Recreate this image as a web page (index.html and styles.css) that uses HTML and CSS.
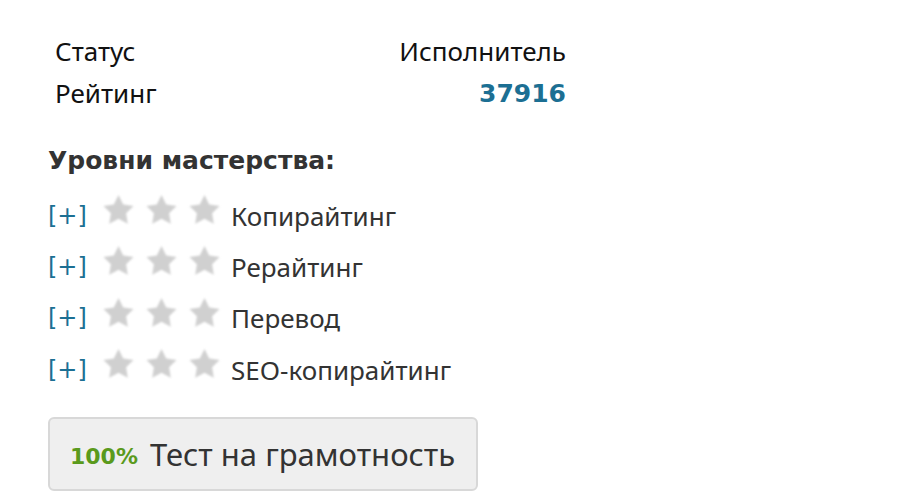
FILE: index.html
```html
<!DOCTYPE html>
<html lang="ru">
<head>
<meta charset="utf-8">
<link rel="stylesheet" href="styles.css">
</head>
<body>
<div class="page">
  <table class="info">
    <tr><td class="label">Статус</td><td class="value">Исполнитель</td></tr>
    <tr><td class="label">Рейтинг</td><td class="value rating">37916</td></tr>
  </table>
  <h3 class="heading">Уровни мастерства:</h3>
  <ul class="skills">
    <li class="skill"><a class="plus">[+]</a><span class="stars"><svg class="star" viewBox="0 0 24 24"><path d="M12 1.5L15.41 8.31 22.94 9.45 17.52 14.79 18.76 22.3 12 18.8 5.24 22.3 6.48 14.79 1.06 9.45 8.59 8.31z"/></svg><svg class="star" viewBox="0 0 24 24"><path d="M12 1.5L15.41 8.31 22.94 9.45 17.52 14.79 18.76 22.3 12 18.8 5.24 22.3 6.48 14.79 1.06 9.45 8.59 8.31z"/></svg><svg class="star" viewBox="0 0 24 24"><path d="M12 1.5L15.41 8.31 22.94 9.45 17.52 14.79 18.76 22.3 12 18.8 5.24 22.3 6.48 14.79 1.06 9.45 8.59 8.31z"/></svg></span><span class="name">Копирайтинг</span></li>
    <li class="skill"><a class="plus">[+]</a><span class="stars"><svg class="star" viewBox="0 0 24 24"><path d="M12 1.5L15.41 8.31 22.94 9.45 17.52 14.79 18.76 22.3 12 18.8 5.24 22.3 6.48 14.79 1.06 9.45 8.59 8.31z"/></svg><svg class="star" viewBox="0 0 24 24"><path d="M12 1.5L15.41 8.31 22.94 9.45 17.52 14.79 18.76 22.3 12 18.8 5.24 22.3 6.48 14.79 1.06 9.45 8.59 8.31z"/></svg><svg class="star" viewBox="0 0 24 24"><path d="M12 1.5L15.41 8.31 22.94 9.45 17.52 14.79 18.76 22.3 12 18.8 5.24 22.3 6.48 14.79 1.06 9.45 8.59 8.31z"/></svg></span><span class="name">Рерайтинг</span></li>
    <li class="skill"><a class="plus">[+]</a><span class="stars"><svg class="star" viewBox="0 0 24 24"><path d="M12 1.5L15.41 8.31 22.94 9.45 17.52 14.79 18.76 22.3 12 18.8 5.24 22.3 6.48 14.79 1.06 9.45 8.59 8.31z"/></svg><svg class="star" viewBox="0 0 24 24"><path d="M12 1.5L15.41 8.31 22.94 9.45 17.52 14.79 18.76 22.3 12 18.8 5.24 22.3 6.48 14.79 1.06 9.45 8.59 8.31z"/></svg><svg class="star" viewBox="0 0 24 24"><path d="M12 1.5L15.41 8.31 22.94 9.45 17.52 14.79 18.76 22.3 12 18.8 5.24 22.3 6.48 14.79 1.06 9.45 8.59 8.31z"/></svg></span><span class="name">Перевод</span></li>
    <li class="skill"><a class="plus">[+]</a><span class="stars"><svg class="star" viewBox="0 0 24 24"><path d="M12 1.5L15.41 8.31 22.94 9.45 17.52 14.79 18.76 22.3 12 18.8 5.24 22.3 6.48 14.79 1.06 9.45 8.59 8.31z"/></svg><svg class="star" viewBox="0 0 24 24"><path d="M12 1.5L15.41 8.31 22.94 9.45 17.52 14.79 18.76 22.3 12 18.8 5.24 22.3 6.48 14.79 1.06 9.45 8.59 8.31z"/></svg><svg class="star" viewBox="0 0 24 24"><path d="M12 1.5L15.41 8.31 22.94 9.45 17.52 14.79 18.76 22.3 12 18.8 5.24 22.3 6.48 14.79 1.06 9.45 8.59 8.31z"/></svg></span><span class="name">SEO-копирайтинг</span></li>
  </ul>
  <div class="test-btn"><span class="pct">100%</span><span class="test-name">Тест на грамотность</span></div>
</div>
</body>
</html>
```

FILE: styles.css
```css
html, body { margin: 0; padding: 0; background: #fff; }
body { font-family: "Noto Sans", "DejaVu Sans", sans-serif; color: #333; }
.page { padding: 30px 0 0 48px; }
.info { border-collapse: collapse; width: 525px; font-size: 26px; color: #111; }
.info td { padding: 0 7px; height: 42px; }
.info .value { text-align: right; }
.info .rating { color: #1c6f93; font-weight: bold; font-family: "DejaVu Sans", sans-serif; font-size: 25px; }
.heading { margin: 27px 0 0 0; font-size: 25px; font-weight: bold; color: #333; font-family: "DejaVu Sans", sans-serif; line-height: 40px; }
.skills { list-style: none; margin: 9px 0 0 0; padding: 0; }
.skill { display: flex; align-items: center; height: 51.3px; font-size: 26px; }
.plus { color: #1c6f93; width: 54px; font-family: "DejaVu Sans", sans-serif; font-size: 24px; }
.stars { display: flex; gap: 10px; margin-right: 10px; }
.star { width: 33px; height: 33px; fill: #d0d0d0; filter: blur(1px); margin-top: -12px; }
.name { color: #333; }
.test-btn { margin-top: 22px; width: 430px; height: 74px; box-sizing: border-box; border: 2px solid #d8d8d8; border-radius: 6px; background: #efefef; display: flex; align-items: center; padding-left: 20px; font-size: 31px; color: #333; }
.pct { color: #5a9a1c; font-weight: bold; font-size: 22px; font-family: "DejaVu Sans", sans-serif; margin-right: 12px; margin-top: 5px; }
```
